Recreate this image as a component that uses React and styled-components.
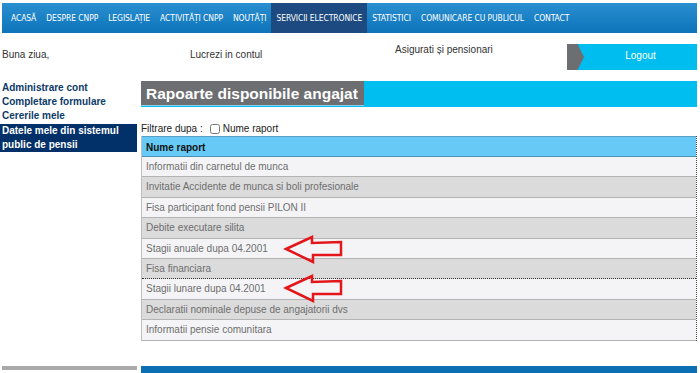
import React from "react";
import styled, { createGlobalStyle } from "styled-components";

const Global = createGlobalStyle`
  html, body { margin: 0; padding: 0; background: #fff; }
  body { font-family: "Liberation Sans", Arial, sans-serif; }
  * { box-sizing: border-box; }
`;

const Page = styled.div`
  width: 700px;
  height: 373px;
  padding: 3px 3px 0 2px;
  overflow: hidden;
  display: flex;
  flex-direction: column;
`;

const Nav = styled.nav`
  height: 30px;
  display: flex;
  align-items: stretch;
  padding-left: 4px;
  background: linear-gradient(#2a8fd0, #0d74bb);
`;

const NavItem = styled.a`
  display: flex;
  align-items: center;
  padding: 0 5px;
  font-family: "DejaVu Sans Condensed", "Liberation Sans Narrow", sans-serif;
  font-stretch: condensed;
  font-size: 8.5px;
  letter-spacing: -0.1px;
  color: #fff;
  text-decoration: none;
  text-transform: uppercase;
  background: ${(p) => (p.$active ? "#1d4a80" : "transparent")};
`;

const InfoRow = styled.div`
  height: 48px;
  display: flex;
  font-size: 10px;
  color: #333;
`;

const InfoCell = styled.div`
  width: ${(p) => p.$w}px;
  padding-top: ${(p) => p.$top}px;
`;

const Logout = styled.button`
  margin-top: 11px;
  width: 130px;
  height: 26px;
  padding: 0;
  border: none;
  display: flex;
  background: #00bdf0;
  color: #fff;
  font-family: "Liberation Sans", Arial, sans-serif;
  font-size: 10px;
  cursor: pointer;
`;

const Notch = styled.span`
  width: 17px;
  background: #6d6e71;
  clip-path: polygon(0 0, 62% 0, 100% 50%, 62% 100%, 0 100%);
`;

const LogoutLabel = styled.span`
  flex: 1;
  padding-top: 6px;
  text-align: center;
`;

const Body = styled.div`
  display: flex;
  gap: 4px;
  align-items: flex-start;
`;

const Sidebar = styled.div`
  width: 135px;
  display: flex;
  flex-direction: column;
`;

const SideLink = styled.a`
  display: block;
  font-size: 10px;
  font-weight: bold;
  line-height: 14px;
  color: ${(p) => (p.$active ? "#fff" : "#0d3a68")};
  background: ${(p) => (p.$active ? "#023068" : "transparent")};
  margin: ${(p) => (p.$active ? "1px 0 0 -2px" : "0")};
  padding: ${(p) => (p.$active ? "0 0 0 2px" : "0")};
  text-decoration: none;
`;

const Main = styled.div`
  position: relative;
  width: 556px;
`;

const TitleBar = styled.div`
  height: 26px;
  background: #00bff0;
  display: flex;
`;

const Title = styled.h1`
  margin: 0;
  height: 25px;
  width: 223px;
  padding: 4px 0 0 5px;
  background: #6d6e71;
  color: #fff;
  font-size: 15.5px;
  font-weight: bold;
  white-space: nowrap;
  overflow: hidden;
  border-bottom: 1px solid #8ad0ee;
`;

const Filter = styled.div`
  margin-top: 14px;
  height: 15px;
  display: flex;
  align-items: center;
  font-size: 10px;
  color: #222;
`;

const Check = styled.input`
  width: 10px;
  height: 10px;
  margin: 0 3px 0 7px;
`;

const Table = styled.div`
  border-left: 1px solid #bdbdbd;
  border-right: 1px dotted #444;
`;

const HeadRow = styled.div`
  height: 21px;
  padding: 5px 0 0 4px;
  background: #66c9f6;
  border-top: 1px solid #5aa0c4;
  border-bottom: 1px solid #4d90b4;
  font-size: 10px;
  font-weight: bold;
  color: #111;
`;

const Row = styled.div`
  height: 20.4px;
  padding: 4px 0 0 4px;
  font-size: 10px;
  color: #6e6e6e;
  background: ${(p) => (p.$alt ? "#dbdbdb" : "#f4f4f6")};
  border-bottom: 1px ${(p) => (p.$dotted ? "dotted #333" : "solid #b4b4b4")};
`;

const Arrow = styled.svg`
  position: absolute;
  left: ${(p) => p.$x}px;
  top: ${(p) => p.$y}px;
  overflow: visible;
`;

const Footer = styled.div`
  margin-top: auto;
  display: flex;
  gap: 4px;
  align-items: flex-start;
  height: 7px;
`;

const FootBar = styled.div`
  width: ${(p) => p.$w}px;
  height: ${(p) => p.$h}px;
  background: ${(p) => p.$c};
`;

const navItems = [
  "Acasă",
  "Despre CNPP",
  "Legislație",
  "Activități CNPP",
  "Noutăți",
  "Servicii electronice",
  "Statistici",
  "Comunicare cu publicul",
  "Contact",
];

const rows = [
  ["Informatii din carnetul de munca", false, false],
  ["Invitatie Accidente de munca si boli profesionale", true, false],
  ["Fisa participant fond pensii PILON II", false, false],
  ["Debite executare silita", true, false],
  ["Stagii anuale dupa 04.2001", false, false],
  ["Fisa financiara", true, true],
  ["Stagii lunare dupa 04.2001", false, false],
  ["Declaratii nominale depuse de angajatorii dvs", true, false],
  ["Informatii pensie comunitara", false, false],
];

const RedArrow = ({ x, y }) => (
  <Arrow $x={x} $y={y} width="58" height="26" viewBox="0 0 58 26">
    <polygon
      points="1,12 27,0 27,6 56,5 56,18 28,18 28,25"
      fill="none"
      stroke="#e3161b"
      strokeWidth="2.5"
      strokeLinejoin="miter"
    />
  </Arrow>
);

export default function App() {
  return (
    <>
      <Global />
      <Page>
        <Nav>
          {navItems.map((t, i) => (
            <NavItem key={t} $active={i === 5}>
              {t}
            </NavItem>
          ))}
        </Nav>
        <InfoRow>
          <InfoCell $w={188} $top={16}>Buna ziua,</InfoCell>
          <InfoCell $w={205} $top={16}>Lucrezi in contul</InfoCell>
          <InfoCell $w={172} $top={11}>Asigurati și pensionari</InfoCell>
          <Logout>
            <Notch />
            <LogoutLabel>Logout</LogoutLabel>
          </Logout>
        </InfoRow>
        <Body>
          <Sidebar>
            <SideLink>Administrare cont</SideLink>
            <SideLink>Completare formulare</SideLink>
            <SideLink>Cererile mele</SideLink>
            <SideLink $active>Datele mele din sistemul public de pensii</SideLink>
          </Sidebar>
          <Main>
            <TitleBar>
              <Title>Rapoarte disponibile angajat</Title>
            </TitleBar>
            <Filter>
              Filtrare dupa :
              <Check type="checkbox" />
              Nume raport
            </Filter>
            <Table>
              <HeadRow>Nume raport</HeadRow>
              {rows.map(([t, alt, dotted]) => (
                <Row key={t} $alt={alt} $dotted={dotted}>
                  {t}
                </Row>
              ))}
            </Table>
            <RedArrow x={144} y={156} />
            <RedArrow x={144} y={195} />
          </Main>
        </Body>
        <Footer>
          <FootBar $w={135} $h={4} $c="#a9a9a9" />
          <FootBar $w={556} $h={7} $c="#0b6fb4" />
        </Footer>
      </Page>
    </>
  );
}
